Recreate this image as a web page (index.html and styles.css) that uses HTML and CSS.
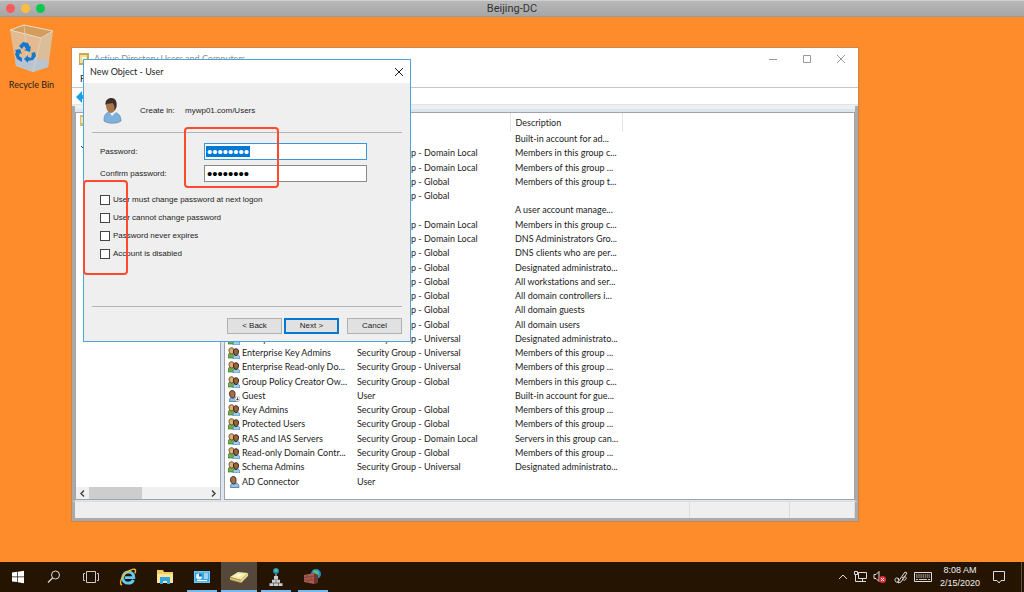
FILE: index.html
```
<!DOCTYPE html>
<html lang="en">
<head>
<meta charset="utf-8">
<title>Beijing-DC</title>
<link rel="stylesheet" href="styles.css">
</head>
<body>
<svg class="symbols" aria-hidden="true">
  <symbol id="person" viewBox="0 0 20 26">
    <path d="M2 22c0-6 3-8 7-8s10 1 10 9c-4 3-13 3-17 0z" fill="#7fb0dc" stroke="#5c8bb8" stroke-width=".7"/>
    <path d="M7 13l3 5 4-4-1-3H7z" fill="#eef4fa"/>
    <path d="M4 7c0-4 2-6 5-6s5 2 5 6-2 8-5 8-5-4-5-8z" fill="#a9754a"/>
    <path d="M3.500 7C3 2 6 0 9.500 0 13 0 15.500 3 14.500 9l-2 4c0-4 0-6-2-8-3 1-5 0-7 2z" fill="#3c3029"/>
  </symbol>
  <symbol id="group" viewBox="0 0 12 12">
    <path d="M0 11V8c0-2 6-3 7 0v3z" fill="#6fae50" stroke="#2f5a2a" stroke-width=".6"/>
    <path d="M1 3c0-3 5-3 5 0S5 7 3.500 7 1 5 1 3z" fill="#e0b070" stroke="#4a3420" stroke-width=".8"/>
    <path d="M5 12c0-4 2-4 4-4s3 1 3 4z" fill="#9ccdf4" stroke="#3f6f9c" stroke-width=".6"/>
    <path d="M5.500 4c0-3 5-3 5 0S9.500 8.500 8 8.500 5.500 6 5.500 4z" fill="#9b633c" stroke="#2b1d16" stroke-width=".9"/>
  </symbol>
  <symbol id="user" viewBox="0 0 12 12">
    <path d="M2.500 11.500c0-5 2-4.500 4.500-4.500s4 1 4 4.500z" fill="#8fc2ee" stroke="#35618c" stroke-width=".7"/>
    <path d="M2.500 3.500c0-4 5.500-4 5.500 0S7 8 5.500 8 2.500 6 2.500 3.500z" fill="#a86f45" stroke="#2b1d16" stroke-width=".9"/>
  </symbol>
  <symbol id="guest" viewBox="0 0 12 12">
    <use href="#user" x="-1" width="12" height="12"/>
    <circle cx="9.500" cy="9" r="2.500" fill="#fff" stroke="#999" stroke-width=".5"/>
    <path d="M9.500 7.500v2.500M8.500 9l1 1.200 1-1.200" stroke="#222" stroke-width=".8" fill="none"/>
  </symbol>
  <symbol id="close" viewBox="0 0 10 10"><path d="M1 1l8 8M9 1L1 9" stroke="currentColor" fill="none"/></symbol>
</svg>

<header class="mac-bar">
  <div class="lights"><span class="light red"></span><span class="light yellow"></span><span class="light green"></span></div>
  <h1 class="mac-title">Beijing-DC</h1>
</header>

<main class="desktop">
  <div class="recycle">
    <svg width="46" height="50" viewBox="0 0 46 50" aria-hidden="true">
      <path d="M1 6L15 1l29 6-5 36-15 5-17-6z" fill="#d9cdb8" fill-opacity=".72"/>
      <path d="M1 6L15 1l29 6-12 7z" fill="#cf9350" fill-opacity=".75" stroke="#eadcc4" stroke-width="1"/>
      <path d="M32 14l12-7-5 36-15 5z" fill="#d3bfa0" fill-opacity=".6"/>
      <path d="M6 36l12-3 22 4-1 6-15 5-17-6z" fill="#b9c4d0"/>
      <path d="M15 1l3 32M32 14l-8 34" stroke="#e5d8c2" stroke-width=".6" fill="none"/>
      <g fill="#1678cc">
        <path d="M10 22l4-4 5 1 2 4 1-1-1 6-6-2 2-1-2-3-2 3z"/>
        <path d="M6 26l5-1 2 5-2-1-1 3 3 2v4l-5-3-2-5 1-2z"/>
        <path d="M15 35l4-4v2l3 1 1-4-1-1 4-1 1 4-3 4-5 1v2z"/>
      </g>
    </svg>
    <span>Recycle Bin</span>
  </div>

  <section class="console" aria-label="Active Directory Users and Computers">
    <div class="console-title">
      <svg width="10" height="12" viewBox="0 0 10 12" aria-hidden="true"><path d="M0 0h10v12H0z" fill="#c9a94e"/><path d="M1 2h7v8H1z" fill="#f1dd96"/><path d="M3 4h4v3H3z" fill="#fff8d8"/></svg>
      <h2>Active Directory Users and Computers</h2>
      <div class="caption-buttons">
        <button type="button" aria-label="Minimize"><svg width="10" height="10" viewBox="0 0 10 10"><path d="M1 5.500h8" stroke="#999"/></svg></button>
        <button type="button" aria-label="Maximize"><svg width="10" height="10" viewBox="0 0 10 10"><path d="M1.500 1.500h7v7h-7z" stroke="#999" fill="none"/></svg></button>
        <button type="button" aria-label="Close"><svg width="10" height="10"><use href="#close"/></svg></button>
      </div>
    </div>
    <div class="menu-bar">F</div>
    <div class="tool-bar"><svg width="14" height="12" viewBox="0 0 14 12" aria-hidden="true"><path d="M0 6l6-6v4h8v4H6v4z" fill="#1ba1e6"/></svg></div>
    <div class="console-body">
      <div class="tree">
        <div class="tree-view">
          <svg width="10" height="36" viewBox="0 0 10 36" aria-hidden="true"><path d="M3 2h7v11H3z" fill="#d8bd68"/><path d="M4 4h6v6H4z" fill="#f5e6ac"/><path d="M4 33l2 2 2-2" stroke="#333" fill="none"/></svg>
        </div>
        <div class="scroll">
          <svg width="5" height="7" viewBox="0 0 5 7" aria-hidden="true"><path d="M4 .5l-3 3 3 3" stroke="#444" stroke-width="1.500" fill="none"/></svg>
          <div class="track"><div class="thumb"></div></div>
          <svg width="5" height="7" viewBox="0 0 5 7" aria-hidden="true"><path d="M1 .5l3 3-3 3" stroke="#444" stroke-width="1.500" fill="none"/></svg>
        </div>
      </div>
      <div class="list">
        <table>
          <thead><tr><th class="c-name"></th><th class="c-type"></th><th class="c-desc">Description</th><th></th></tr></thead>
          <tbody>
            <tr><td></td><td></td><td>Built-in account for ad...</td></tr>
            <tr><td></td><td>Security Group - Domain Local</td><td>Members in this group c...</td></tr>
            <tr><td></td><td>Security Group - Domain Local</td><td>Members of this group ...</td></tr>
            <tr><td></td><td>Security Group - Global</td><td>Members of this group t...</td></tr>
            <tr><td></td><td>Security Group - Global</td><td></td></tr>
            <tr><td></td><td></td><td>A user account manage...</td></tr>
            <tr><td></td><td>Security Group - Domain Local</td><td>Members in this group c...</td></tr>
            <tr><td></td><td>Security Group - Domain Local</td><td>DNS Administrators Gro...</td></tr>
            <tr><td></td><td>Security Group - Global</td><td>DNS clients who are per...</td></tr>
            <tr><td></td><td>Security Group - Global</td><td>Designated administrato...</td></tr>
            <tr><td></td><td>Security Group - Global</td><td>All workstations and ser...</td></tr>
            <tr><td></td><td>Security Group - Global</td><td>All domain controllers i...</td></tr>
            <tr><td></td><td>Security Group - Global</td><td>All domain guests</td></tr>
            <tr><td></td><td>Security Group - Global</td><td>All domain users</td></tr>
            <tr><td><svg class="ico"><use href="#group"/></svg>Enterprise Admins</td><td>Security Group - Universal</td><td>Designated administrato...</td></tr>
            <tr><td><svg class="ico"><use href="#group"/></svg>Enterprise Key Admins</td><td>Security Group - Universal</td><td>Members of this group ...</td></tr>
            <tr><td><svg class="ico"><use href="#group"/></svg>Enterprise Read-only Do...</td><td>Security Group - Universal</td><td>Members of this group ...</td></tr>
            <tr><td><svg class="ico"><use href="#group"/></svg>Group Policy Creator Ow...</td><td>Security Group - Global</td><td>Members in this group c...</td></tr>
            <tr><td><svg class="ico"><use href="#guest"/></svg>Guest</td><td>User</td><td>Built-in account for gue...</td></tr>
            <tr><td><svg class="ico"><use href="#group"/></svg>Key Admins</td><td>Security Group - Global</td><td>Members of this group ...</td></tr>
            <tr><td><svg class="ico"><use href="#group"/></svg>Protected Users</td><td>Security Group - Global</td><td>Members of this group ...</td></tr>
            <tr><td><svg class="ico"><use href="#group"/></svg>RAS and IAS Servers</td><td>Security Group - Domain Local</td><td>Servers in this group can...</td></tr>
            <tr><td><svg class="ico"><use href="#group"/></svg>Read-only Domain Contr...</td><td>Security Group - Global</td><td>Members of this group ...</td></tr>
            <tr><td><svg class="ico"><use href="#group"/></svg>Schema Admins</td><td>Security Group - Universal</td><td>Designated administrato...</td></tr>
            <tr><td><svg class="ico"><use href="#user"/></svg>AD Connector</td><td>User</td><td></td></tr>
          </tbody>
        </table>
      </div>
    </div>
    <div class="status"><span></span><span></span><span></span></div>
  </section>

  <form class="dialog" role="dialog" aria-labelledby="dlg-title">
    <div class="dialog-title">
      <h2 id="dlg-title">New Object - User</h2>
      <button type="button" aria-label="Close"><svg width="10" height="10"><use href="#close"/></svg></button>
    </div>
    <div class="dialog-body">
      <div class="intro">
        <svg width="20" height="26" aria-hidden="true"><use href="#person"/></svg>
        <span class="intro-label">Create in:</span><span>mywp01.com/Users</span>
      </div>
      <div class="fields">
        <label for="pw">Password:</label>
        <div class="box focus"><input id="pw" type="password" value="password" autocomplete="off"></div>
        <label for="pw2">Confirm password:</label>
        <div class="box"><input id="pw2" type="password" value="password" autocomplete="off"></div>
        <div class="mark mark-fields"></div>
      </div>
      <div class="options">
        <label><input type="checkbox">User must change password at next logon</label>
        <label><input type="checkbox">User cannot change password</label>
        <label><input type="checkbox">Password never expires</label>
        <label><input type="checkbox">Account is disabled</label>
        <div class="mark mark-options"></div>
      </div>
      <div class="actions">
        <button type="button">&lt; Back</button>
        <button type="button" class="default">Next &gt;</button>
        <button type="button" class="cancel">Cancel</button>
      </div>
    </div>
  </form>
</main>

<footer class="taskbar">
  <nav class="apps" aria-label="Taskbar">
    <button type="button" class="app" aria-label="Start"><svg width="14" height="14" viewBox="0 0 14 14"><path d="M1 2.500l5-.7v4.800H1zM6.700 1.700L13 .8v5.800H6.700zM1 7.300h5v4.800l-5-.7zM6.700 7.300H13v5.900l-6.300-.9z" fill="#fff"/></svg></button>
    <button type="button" class="app" aria-label="Search"><svg width="14" height="14" viewBox="0 0 14 14"><circle cx="8.500" cy="5" r="4" stroke="#ddd" fill="none"/><path d="M5.500 8L1 12.500" stroke="#ddd" stroke-width="1.200"/></svg></button>
    <button type="button" class="app" aria-label="Task view"><svg width="18" height="12" viewBox="0 0 18 12"><path d="M4.500.5h9v11h-9zM3 2.500H1.500v7H3M15 2.500h1.500v7H15" stroke="#ccc" fill="none"/></svg></button>
    <button type="button" class="app" aria-label="Internet Explorer"><svg width="18" height="18" viewBox="0 0 18 18"><path d="M14.500 12c-1 2-2.800 3.200-5.200 3.200-3.300 0-5.500-2.200-5.500-5.500s2.200-5.700 5.500-5.700 5.500 2.300 5.500 5.700H6" stroke="#62cbf5" stroke-width="2.800" fill="none"/><path d="M3 17C0 16 2 9 7 5s9-5 9.500-2.500c.2 1-.2 2-.7 3" stroke="#f5bd2e" stroke-width="1.400" fill="none"/></svg></button>
    <button type="button" class="app" aria-label="File Explorer"><svg width="18" height="16" viewBox="0 0 18 16"><path d="M1 1h6l1 2h9v11H1z" fill="#f3cc62"/><path d="M1 5h16v9H1z" fill="#fbe49b"/><path d="M4 15V8h10v7h-3v-3H7v3z" fill="#33a7e0"/></svg></button>
    <button type="button" class="app running" aria-label="Server Manager"><svg width="16" height="12" viewBox="0 0 16 12"><path d="M0 0h16v12H0z" fill="#6dc9f5"/><path d="M1 1.500h14v9H1z" fill="#3da4df"/><circle cx="5" cy="5.500" r="3" fill="#e5f5fd"/><path d="M5 5.500V2.500a3 3 0 013 3z" fill="#1668a8"/><path d="M10 3h4M10 5h4M10 7h4M3 9.500h10" stroke="#fff"/></svg></button>
    <button type="button" class="app running active" aria-label="Active Directory Users and Computers"><svg width="20" height="14" viewBox="0 0 20 14"><path d="M1 7l8-5 10 1-7 7z" fill="#f5e7a6"/><path d="M1 7l11 3v3L1 10z" fill="#b89b45"/><path d="M12 10l7-7v3l-7 7z" fill="#e2ce7c"/><path d="M6 6l4-2 4 .5L10 7z" fill="#fffbe0"/><path d="M1 8.500l11 3 7-7" stroke="#fff5c5" stroke-width=".6" fill="none"/></svg></button>
    <button type="button" class="app running" aria-label="Sites and Services"><svg width="16" height="18" viewBox="0 0 16 18"><circle cx="8" cy="3" r="3" fill="#1683c4"/><path d="M7 .5l3 1-1 3-3-1z" fill="#4fc46a"/><path d="M8 6v3" stroke="#ccc"/><path d="M6 8h4v3.500H6zM4 11.800h3.800v3H4zM8.200 11.800H12v3H8.200zM1.500 15.200h4V18h-4zM6 15.200h4V18H6zM10.500 15.200h4V18h-4z" fill="#c9ced1"/></svg></button>
    <button type="button" class="app running" aria-label="Firewall"><svg width="18" height="16" viewBox="0 0 18 16"><circle cx="12" cy="5" r="5" fill="#248ccb"/><path d="M9 1l5 1 1 4-5-1z" fill="#5cc16a"/><path d="M0 6l10-2v11L0 13z" fill="#a75b50"/><path d="M10 4l4 2v8l-4 1z" fill="#70352f"/><path d="M0 8.500l10-1.500M0 11h10M3 6v3M7 8v3M4 11v3" stroke="#7c3a34" stroke-width=".7"/></svg></button>
  </nav>
  <div class="tray">
    <svg width="10" height="8" viewBox="0 0 10 8"><path d="M1 6l4-4 4 4" stroke="#ddd" fill="none"/></svg>
    <svg width="14" height="12" viewBox="0 0 14 12"><path d="M4.500 1.500h8v6h-8zM8.500 7.500v3M6 10.500h6M.5.500h3v3h-3zM1.500 3.500v7h5" stroke="#ddd" fill="none"/></svg>
    <svg class="sound" width="14" height="12" viewBox="0 0 14 12"><path d="M1 3.500h2l3-3v10l-3-3H1z" stroke="#ddd" fill="none"/><circle cx="9.500" cy="8.500" r="3.500" fill="#e0303c"/><path d="M8 7l3 3M11 7l-3 3" stroke="#fff"/></svg>
    <svg class="pen" width="14" height="14" viewBox="0 0 14 14"><path d="M4 12l7-10 2 1-6 9-3 1zM5 9C1 6 0 10 2 12c2 1 3-1 2-4M8 8c3-2 5-1 4 1s-3 1-4 0" stroke="#ddd" fill="none"/></svg>
    <svg width="18" height="12" viewBox="0 0 18 12"><path d="M.5 1.500h17v9H.5z" stroke="#ddd" fill="none"/><path d="M2 4h14M2 6h14" stroke="#ccc" stroke-dasharray="1.500 .7"/><path d="M2 8.500h2M5 8.500h8M14 8.500h2" stroke="#ccc"/></svg>
    <div class="clock"><span>8:08 AM</span><span>2/15/2020</span></div>
    <svg class="note" width="14" height="14" viewBox="0 0 14 14"><path d="M1.500 1.500h11v9H9l-2 2.500-2-2.500H1.500z" stroke="#ddd" fill="none"/></svg>
  </div>
</footer>
</body>
</html>
```
FILE: styles.css
```
* { box-sizing: border-box; }
body {
  margin: 0;
  min-height: 100vh;
  display: flex;
  flex-direction: column;
  background: #ff8c2b;
  color: #1c1c1c;
  font: 9px/12px Lato, "Noto Sans", sans-serif;
}
body, h1, h2, button, .dialog, .dialog-title { font-variant-ligatures: none; }
h1, h2 { margin: 0; font-size: inherit; font-weight: inherit; }
button { padding: 0; border: 0; background: none; color: inherit; font-family: inherit; font-size: inherit; line-height: inherit; }
svg { display: block; flex: none; }
.symbols { position: absolute; width: 0; height: 0; }

.mac-bar {
  display: grid;
  grid-template-columns: 1fr auto 1fr;
  align-items: center;
  height: 17px;
  border-top: 1px solid #d0d0d0;
  border-bottom: 1px solid #999;
  background: linear-gradient(#b8b8b8, #a6a6a6);
}
.mac-title { font: 11px/14px Roboto, sans-serif; color: #333; }
.lights { display: flex; gap: 6px; padding-left: 6px; }
.light { width: 9px; height: 9px; border-radius: 50%; }
.red { background: #fc5b5b; }
.yellow { background: #fdbc40; }
.green { background: #0bc94c; }

.desktop { position: relative; flex: 1; }
.recycle {
  display: flex;
  flex-direction: column;
  align-items: center;
  gap: 5px;
  width: 63px;
  padding-top: 7px;
}

.console {
  position: absolute;
  inset: 31px 166px 41px 72px;
  display: flex;
  flex-direction: column;
  background: #fff;
  outline: 1px solid #c98648;
}
.console-title { display: flex; align-items: center; gap: 5px; height: 22px; padding-left: 7px; color: #8e8e8e; }
.caption-buttons { display: flex; margin-left: auto; }
.caption-buttons button { width: 34px; height: 22px; display: grid; place-items: center; color: #999; }
.menu-bar { height: 18px; padding: 3px 8px; border-bottom: 1px solid #c4c6cb; }
.tool-bar { height: 17px; padding: 3px 4px; border-bottom: 1px solid #e3e3e3; }
.console-body {
  flex: 1;
  min-height: 0;
  display: grid;
  grid-template-columns: 146px 1fr;
  gap: 3px;
  padding: 7px 0 1px;
  border: solid #aaa;
  border-width: 0 3px;
  border-image: linear-gradient(#efefef 4px, #aaa 4px) 3;
  background: linear-gradient(#efefef 4px, #dbe6ef 4px);
}
.tree, .list { background: #fff; border: 1px solid #a0a4aa; min-width: 0; }
.tree { display: flex; flex-direction: column; }
.tree-view { flex: 1; padding-left: 1px; }
.scroll { display: flex; align-items: center; gap: 4px; height: 12px; padding: 0 4px; background: #f0f0f0; }
.track { flex: 1; height: 12px; }
.thumb { width: 45%; height: 12px; background: #cdcdcd; }

.list { overflow: hidden; padding-left: 3px; }
table { width: 100%; height: 376px; border-collapse: collapse; table-layout: fixed; }
th { height: 19px; padding: 0 0 0 4px; border-right: 1px solid #e5e5e5; text-align: left; font-weight: normal; }
th:nth-child(1), th:nth-child(4) { border: 0; }
.c-name { width: 125px; }
.c-type { width: 157px; }
.c-desc { width: 112px; }
td { height: 14px; padding: 0 0 0 4px; white-space: nowrap; }
td:first-child { padding: 0; }
th:nth-child(3), td:nth-child(3) { padding-left: 5px; }
.ico { display: inline-block; width: 12px; height: 12px; margin-right: 2px; vertical-align: top; }

.status {
  display: grid;
  grid-template-columns: 1fr 100px 65px;
  height: 20px;
  border: 3px solid #aaa;
  border-top: 1px solid #ddd;
  background: #efefef;
}
.status span { border-right: 1px solid #dcdcdc; }

.dialog {
  position: absolute;
  left: 83px;
  top: 42px;
  width: 328px;
  border: 1px solid #4aa5e0;
  background: #efefef;
  font-family: "Liberation Sans", Arial, sans-serif;
  font-size: 8px;
}
.dialog-title {
  display: flex;
  align-items: center;
  justify-content: space-between;
  height: 23px;
  padding: 0 6px;
  background: #fff;
  font-family: Lato, "Noto Sans", sans-serif;
  font-size: 9px;
}
.dialog-body { padding: 0 8px 7px; }
.intro { display: flex; align-items: center; height: 50px; padding: 6px 10px 0; border-bottom: 1px solid #b4b4b4; }
.intro-label { width: 45px; margin-left: 18px; }
.intro > span { white-space: nowrap; }
.fields {
  position: relative;
  display: grid;
  grid-template-columns: 104px 163px;
  row-gap: 5px;
  align-items: center;
  padding: 10px 8px 12px;
}
.box { display: flex; height: 17px; padding: 2px 1px; border: 1px solid #8a8a8a; background: #fff; }
.box input {
  width: 44px;
  height: 11px;
  padding: 0 1px;
  border: 0;
  outline: 0;
  background: none;
  color: #000;
  font: 15px/11px "Liberation Sans", Arial, sans-serif;
}
.focus { border-color: #3b95dc; }
.box.focus input { background: #0078d7; color: #fff; }
.options { position: relative; display: grid; row-gap: 6px; padding: 0 8px 46px; }
.options label { display: flex; align-items: center; gap: 3px; height: 12px; }
.options input { appearance: none; width: 10px; height: 10px; margin: 0; border: 1px solid #444; background: #fff; }
.mark { position: absolute; border: 2px solid #ff4a30; border-radius: 4px; pointer-events: none; }
.mark-fields { left: 92px; top: -6px; width: 95px; height: 61px; }
.mark-options { left: -9px; top: -14px; width: 45px; height: 95px; }
.actions { display: flex; justify-content: flex-end; gap: 2px; padding-top: 11px; border-top: 1px solid #b4b4b4; }
.actions button { width: 55px; height: 16px; border: 1px solid #b0b0b0; background: #e1e1e1; }
.actions .default { border: 2px solid #0078d7; }
.actions .cancel { margin-left: 6px; }

.taskbar { display: flex; justify-content: space-between; height: 30px; background: #261403; color: #eee; }
.apps { display: flex; gap: 1px; }
.app { width: 36px; height: 30px; display: grid; place-items: center; }
.app:first-child { width: 35px; }
.running { background: linear-gradient(#76b9ed, #76b9ed) center bottom / 30px 2px no-repeat; }
.active { background: linear-gradient(#76b9ed, #76b9ed) center bottom / 36px 2px no-repeat #55473a; }
.tray { display: flex; align-items: center; gap: 6px; margin-right: 2px; padding-right: 15px; border-right: 1px solid #5c5148; }
.sound { margin-left: -1px; }
.pen { margin-left: 1px; }
.clock { display: flex; flex-direction: column; align-items: center; width: 44px; font: 9px/13px "Liberation Sans", Arial, sans-serif; }
.note { margin-left: 4px; }
```
